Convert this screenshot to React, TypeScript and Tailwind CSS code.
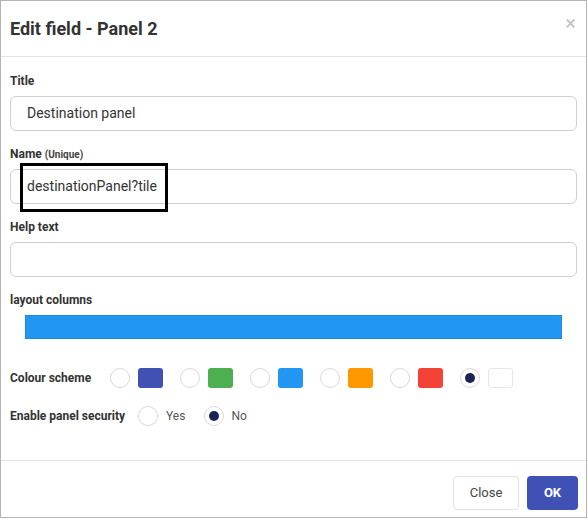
import React from "react";

const font = { fontFamily: "Roboto, 'Liberation Sans', sans-serif" };

function Radio({ checked = false }: { checked?: boolean }) {
  return (
    <div className="w-[20px] h-[20px] rounded-full border border-[#d9d9d9] bg-white flex items-center justify-center shrink-0">
      {checked && <div className="w-[10px] h-[10px] rounded-full bg-[#1a2257]" />}
    </div>
  );
}

function Field({ label, sub, value, children }: { label: string; sub?: string; value?: string; children?: React.ReactNode }) {
  return (
    <div className="flex flex-col">
      <div className="h-[16px] flex items-center text-[12px] font-bold text-[#333]">
        {label}
        {sub && <span className="ml-[3px] text-[10px] font-bold text-[#444]">{sub}</span>}
      </div>
      <div className="relative mt-[7px] h-[35px] border border-[#cfcfcf] rounded-[6px] bg-white flex items-center pl-[16px] text-[14px] text-[#333]">
        {value}
        {children}
      </div>
    </div>
  );
}

export default function App() {
  const colours = ["#3f51b5", "#4caf50", "#2196f3", "#ff9800", "#f44336", "#ffffff"];
  return (
    <div style={font} className="w-[587px] h-[518px] border border-[#b3b3b3] bg-white flex flex-col text-[#333]">
      <div className="h-[56px] border-b border-[#e3e3e3] flex items-center justify-between pl-[9px] pr-[10px] shrink-0">
        <div className="text-[18px] font-bold text-[#333]">Edit field - Panel 2</div>
        <div className="text-[20px] leading-none text-[#c2c2c2] -mt-[11px]">×</div>
      </div>
      <div className="flex-1 flex flex-col px-[9px] pt-[16px]">
        <Field label="Title" value="Destination panel" />
        <div className="h-[15px]" />
        <Field label="Name" sub="(Unique)" value="destinationPanel?tile">
          <div className="absolute left-[9px] top-[-7px] w-[148px] h-[49px] border-[3px] border-black" />
        </Field>
        <div className="h-[15px]" />
        <Field label="Help text" />
        <div className="h-[15px]" />
        <div className="h-[16px] flex items-center text-[12px] font-bold text-[#333]">layout columns</div>
        <div className="mt-[7px] mx-[15px] h-[24px] bg-[#2196f3] border border-[#1e88e5]" />
        <div className="mt-[29px] h-[20px] flex items-center">
          <div className="w-[100px] text-[12px] font-bold text-[#333]">Colour scheme</div>
          <div className="flex items-center gap-[17px]">
            {colours.map((c, i) => (
              <div key={i} className="flex items-center gap-[8px]">
                <Radio checked={i === 5} />
                <div
                  className={i === 5 ? "w-[25px] h-[20px] rounded-[3px] border border-[#e6e6e6]" : "w-[25px] h-[20px] rounded-[3px]"}
                  style={{ backgroundColor: c }}
                />
              </div>
            ))}
          </div>
        </div>
        <div className="mt-[18px] h-[20px] flex items-center">
          <div className="w-[128px] text-[12px] font-bold text-[#333]">Enable panel security</div>
          <Radio />
          <span className="ml-[8px] text-[12px] text-[#555]">Yes</span>
          <div className="ml-[19px]"><Radio checked /></div>
          <span className="ml-[7px] text-[12px] text-[#555]">No</span>
        </div>
      </div>
      <div className="h-[57px] border-t border-[#e3e3e3] flex items-start justify-end pt-[15px] pr-[8px] gap-[8px] shrink-0">
        <div className="w-[66px] h-[34px] border border-[#e3e3e3] rounded-[4px] flex items-center justify-center text-[13px] text-[#444]">Close</div>
        <div className="w-[51px] h-[34px] bg-[#3f51b5] rounded-[4px] flex items-center justify-center text-[13px] font-bold text-white">OK</div>
      </div>
    </div>
  );
}
